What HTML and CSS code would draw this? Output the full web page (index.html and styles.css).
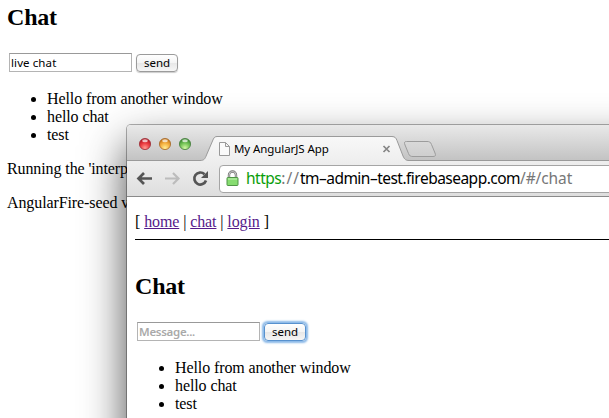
FILE: index.html
```html
<!DOCTYPE html>
<html lang="en">
<head>
<meta charset="utf-8">
<title>Chat</title>
<link rel="stylesheet" href="styles.css">
</head>
<body>
<main class="page">
  <h2>Chat</h2>
  <div class="form"><input class="field" type="text" value="live chat"><button class="send">send</button></div>
  <ul><li>Hello from another window</li><li>hello chat</li><li>test</li></ul>
  <p>Running the 'interp</p>
  <p>AngularFire-seed v</p>
</main>
<section class="window">
  <header class="tabstrip">
    <svg class="tabs" width="482" height="37" viewBox="0 0 482 37">
      <defs>
        <linearGradient id="tab" x1="0" y1="0" x2="0" y2="1"><stop offset="0" stop-color="#f8f8f8"/><stop offset="1" stop-color="#eeeeee"/></linearGradient>
        <linearGradient id="plus" x1="0" y1="0" x2="0" y2="1"><stop offset="0" stop-color="#d9d9d9"/><stop offset="1" stop-color="#cecece"/></linearGradient>
        <radialGradient id="red" cx=".5" cy=".85" r=".75"><stop offset="0" stop-color="#ff9b91"/><stop offset=".55" stop-color="#ed3f43"/><stop offset="1" stop-color="#b81622"/></radialGradient>
        <radialGradient id="amber" cx=".5" cy=".85" r=".75"><stop offset="0" stop-color="#ffed94"/><stop offset=".55" stop-color="#f6b343"/><stop offset="1" stop-color="#c97816"/></radialGradient>
        <radialGradient id="green" cx=".5" cy=".85" r=".75"><stop offset="0" stop-color="#d1f7a4"/><stop offset=".55" stop-color="#78c65a"/><stop offset="1" stop-color="#3b8d31"/></radialGradient>
      </defs>
      <path d="M0 35.500H73C77 35.500 78 34 79.500 30L85.500 16C86.700 13 87.500 12 90 12H265C268 12 269 13 270 15.500L276 31C277.500 34.500 279 35.500 282 35.500H482V37H0Z" fill="url(#tab)"/>
      <path d="M0 35.500H73C77 35.500 78 34 79.500 30L85.500 16C86.700 13 87.500 11.500 90 11.500H265C268 11.500 269 13 270 15.500L276 31C277.500 34.500 279 35.500 282 35.500H482" fill="none" stroke="#9a9a9a"/>
      <path d="M279.500 16.500H300C302.500 16.500 303.500 17 304.500 19.500L308 28C309 30.500 308.500 31.500 306 31.500H286C283.500 31.500 282.500 31 281.500 28.500L278 20C277 17.500 277.300 16.500 279.500 16.500Z" fill="url(#plus)" stroke="#9c9c9c"/>
      <g stroke-width=".8">
        <circle cx="18" cy="19" r="5.600" fill="url(#red)" stroke="#9c3038"/>
        <circle cx="38" cy="19" r="5.600" fill="url(#amber)" stroke="#a4682a"/>
        <circle cx="58" cy="19" r="5.600" fill="url(#green)" stroke="#467e3d"/>
      </g>
      <g fill="#fff" opacity=".7"><ellipse cx="18" cy="15.700" rx="2.800" ry="1.500"/><ellipse cx="38" cy="15.700" rx="2.800" ry="1.500"/><ellipse cx="58" cy="15.700" rx="2.800" ry="1.500"/></g>
      <path d="M92.500 17.500H98.500L102.500 21.500V30.500H92.500ZM98.500 17.500V21.500H102.500" fill="#fafafa" stroke="#999"/>
      <path d="M256.500 21L262.500 27M262.500 21L256.500 27" stroke="#858585" stroke-width="1.700"/>
    </svg>
    <span class="title">My AngularJS App</span>
  </header>
  <nav class="toolbar">
    <svg class="tools" width="91" height="34" viewBox="0 0 91 34">
      <path d="M25 16.500H11.500M17 11L11.500 16.500L17 22" fill="none" stroke="#555" stroke-width="2.700"/>
      <path d="M38 16.500H51.500M46 11L51.500 16.500L46 22" fill="none" stroke="#bcbcbc" stroke-width="2.200"/>
      <path d="M79 18.500A6 6 0 1 1 77.500 12.200" fill="none" stroke="#555" stroke-width="2.700"/>
      <path d="M81 9V16H74Z" fill="#555"/>
    </svg>
    <div class="omnibox">
      <svg class="lock" width="13" height="17" viewBox="0 0 13 17">
        <path d="M3 8V5A3.500 3.500 0 0 1 10 5V8" fill="none" stroke="#777" stroke-width="2.400"/>
        <path d="M3 8V5A3.500 3.500 0 0 1 10 5V8" fill="none" stroke="#ddd" stroke-width=".8"/>
        <rect x="1" y="7.500" width="11" height="8" rx=".8" fill="#86dc70" stroke="#4f9446"/>
        <path d="M2 9H11" stroke="#c2f3b4"/>
      </svg>
      <span class="scheme">https</span><span class="sep">://</span><span class="host">tm–admin–test.firebaseapp.com</span><span class="path">/#/chat</span>
    </div>
  </nav>
  <div class="content">
    <div class="menu">[ <a>home</a> | <a>chat</a> | <a>login</a> ]</div>
    <h2>Chat</h2>
    <div class="form"><input class="field" type="text" placeholder="Message..."><button class="send focused">send</button></div>
    <ul><li>Hello from another window</li><li>hello chat</li><li>test</li></ul>
  </div>
</section>
</body>
</html>
```
FILE: styles.css
```css
* { box-sizing: border-box; }
html { overflow: hidden; }
body {
  margin: 0;
  width: 609px;
  height: 418px;
  overflow: hidden;
  position: relative;
  background: #fff;
  color: #000;
  font: 16px/18px "Liberation Serif", serif;
  letter-spacing: -.1px;
}
h2 { margin: 0; font-size: 24px; line-height: 28px; letter-spacing: -.2px; }
ul { margin: 17px 0 16px; padding-left: 40px; }
p { margin: 0 0 16px; white-space: nowrap; }
.page { padding: 3px 7px; }
.form { display: flex; align-items: flex-start; gap: 4px; height: 20px; margin: 22px 0 0 2px; }
.field {
  width: 123px;
  height: 19px;
  margin: 0;
  padding: 0 1px;
  border: 1px solid #b4b4b4;
  border-top-color: #999;
  border-radius: 0;
  outline: 0;
  font: 11.5px "Noto Sans", sans-serif;
  letter-spacing: .1px;
}
.field::placeholder { color: #a9a9a9; font-weight: 600; opacity: 1; letter-spacing: -.3px; }
.send {
  width: 42px;
  height: 18px;
  margin: 1px 0 0;
  padding: 0;
  border: 1px solid #9b9b9b;
  border-radius: 4px;
  background: linear-gradient(#fff, #f4f4f4 50%, #e7e7e7 51%, #f6f6f6);
  box-shadow: 0 1px 1px #ccc;
  font: 11.5px/14px "Noto Sans", sans-serif;
}
.send.focused { border-color: #5791ce; box-shadow: 0 0 2px 1.500px #8bb9e8; }
.window {
  position: absolute;
  left: 127px;
  top: 125px;
  width: 560px;
  height: 420px;
  background: #fff;
  border-radius: 4px 0 0 0;
  box-shadow: 0 0 0 1px rgba(0,0,0,.3), 0 20px 44px rgba(0,0,0,.72);
}
.tabstrip {
  position: relative;
  height: 37px;
  border-radius: 4px 0 0 0;
  background: linear-gradient(#e9e9e9, #c1c1c1);
}
.tabs { display: block; }
.title {
  position: absolute;
  left: 107px;
  top: 15px;
  font: 11.500px/18px "Noto Sans", sans-serif;
  letter-spacing: -.08px;
}
.toolbar {
  display: flex;
  height: 35px;
  border-bottom: 1px solid #8a8a8a;
  background: linear-gradient(#eee, #dedede);
}
.tools { flex: none; }
.omnibox {
  display: flex;
  flex: 1;
  align-items: center;
  height: 28px;
  margin: 3px 0 0 1px;
  padding-left: 6px;
  border: 1px solid #a5a5a5;
  border-radius: 4px;
  background: #fff;
  font: 15.500px/24px "Noto Sans", sans-serif;
  letter-spacing: 0;
}
.lock { margin: 0 7px 2px 0; }
.omnibox span { margin-bottom: 2px; }
.scheme { color: #0a9e0a; letter-spacing: -.5px; }
.sep, .path { color: #777; }
.sep { letter-spacing: 1px; }
.host { letter-spacing: -.52px; }
.path { letter-spacing: -.1px; }
.content { padding: 16px 8px; }
.menu { height: 27px; border-bottom: 1px solid #000; letter-spacing: -.1px; }
.menu a { color: #551a8b; text-decoration: underline; }
.content h2 { margin-top: 32px; }
```
